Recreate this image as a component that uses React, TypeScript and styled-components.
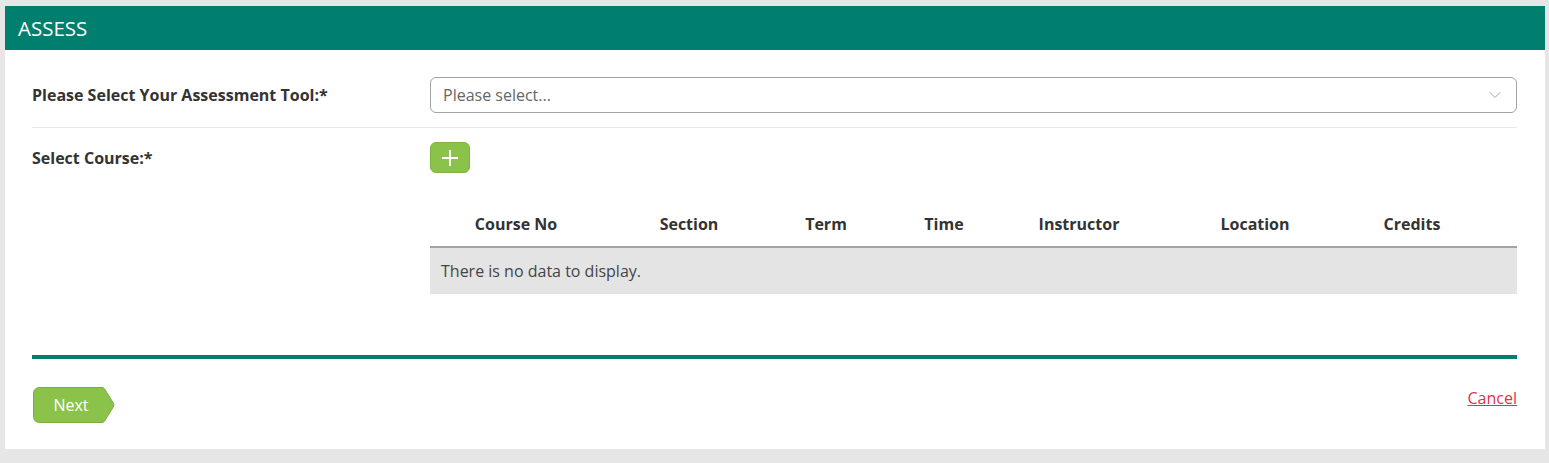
import React from "react";
import styled, { createGlobalStyle } from "styled-components";
import { ChevronDown } from "lucide-react";

const Global = createGlobalStyle`
  html, body { margin: 0; padding: 0; background: #e6e6e6; }
  body { font-family: "Open Sans", "Liberation Sans", sans-serif; color: #333; }
  * { box-sizing: border-box; }
`;

const Page = styled.div`
  padding: 6px 4px 13px 5px;
`;

const Panel = styled.section`
  background: #fff;
`;

const Header = styled.header`
  height: 44px;
  background: #007f6e;
  color: #fff;
  font-size: 20.5px;
  display: flex;
  align-items: center;
  padding-left: 13px;
`;

const Body = styled.div`
  padding: 27px 28px 26px 27px;
`;

const FieldRow = styled.div<{ $divider?: boolean }>`
  display: grid;
  grid-template-columns: 398px 1fr;
  align-items: ${(p) => (p.$divider ? "center" : "start")};
  padding: ${(p) => (p.$divider ? "0 0 14px" : "14px 0 0")};
  border-bottom: ${(p) => (p.$divider ? "1px solid #e8e8e8" : "none")};
`;

const Label = styled.label`
  font-size: 16px;
  font-weight: 700;
  color: #333;
  line-height: 32px;
`;

const Select = styled.div`
  height: 36px;
  border: 1px solid #a3a3a3;
  border-radius: 6px;
  display: flex;
  align-items: center;
  justify-content: space-between;
  padding: 0 11px 0 12px;
  font-size: 16px;
  color: #666;
  svg { color: #9a9a9a; }
`;

const AddButton = styled.button`
  width: 40px;
  height: 31px;
  border: 1px solid #7cb342;
  border-radius: 6px;
  background: #8bc34a;
  display: flex;
  align-items: center;
  justify-content: center;
  padding: 0;
  cursor: pointer;
`;

const Table = styled.div`
  margin-top: 29px;
`;

const HeadRow = styled.div`
  display: grid;
  grid-template-columns: 172px 174px 100px 136px 134px 218px 96px 1fr;
  height: 46px;
  align-items: center;
  border-bottom: 2px solid #a3a3a3;
`;

const HeadCell = styled.div`
  text-align: center;
  font-size: 16px;
  font-weight: 700;
  color: #333;
`;

const EmptyRow = styled.div`
  height: 46px;
  background: #e4e4e4;
  display: flex;
  align-items: center;
  padding-left: 11px;
  font-size: 16px;
  color: #444;
`;

const Rule = styled.hr`
  margin: 61px 0 0;
  border: none;
  height: 4px;
  background: #007f6e;
`;

const Footer = styled.div`
  margin-top: 28px;
  display: flex;
  justify-content: space-between;
  align-items: flex-start;
  padding-left: 1px;
`;

const NextButton = styled.button`
  position: relative;
  width: 82px;
  height: 36px;
  border: none;
  background: transparent;
  padding: 0 6px 0 0;
  color: #fff;
  font-family: inherit;
  font-size: 16px;
  cursor: pointer;
  svg { position: absolute; left: 0; top: 0; }
  span { position: relative; }
`;

const CancelLink = styled.a`
  color: #d9334d;
  font-size: 16px;
  line-height: 22px;
  text-decoration: underline;
  cursor: pointer;
`;

const columns = ["Course No", "Section", "Term", "Time", "Instructor", "Location", "Credits", ""];

export default function App() {
  return (
    <>
      <Global />
      <Page>
        <Panel>
          <Header>ASSESS</Header>
          <Body>
            <FieldRow $divider>
              <Label>Please Select Your Assessment Tool:*</Label>
              <Select>
                <span>Please select...</span>
                <ChevronDown size={20} strokeWidth={1.1} />
              </Select>
            </FieldRow>
            <FieldRow>
              <Label>Select Course:*</Label>
              <div>
                <AddButton aria-label="Add course">
                  <svg width="18" height="18" viewBox="0 0 18 18">
                    <path d="M9 1v16M1 9h16" stroke="#fff" strokeWidth="2" />
                  </svg>
                </AddButton>
                <Table>
                  <HeadRow>
                    {columns.map((c, i) => (
                      <HeadCell key={i}>{c}</HeadCell>
                    ))}
                  </HeadRow>
                  <EmptyRow>There is no data to display.</EmptyRow>
                </Table>
              </div>
            </FieldRow>
            <Rule />
            <Footer>
              <NextButton>
                <svg width="82" height="36" viewBox="0 0 82 36">
                  <path
                    d="M7 0.5 H69 Q70.5 0.5 71.5 1.8 L80.5 16.3 Q81.3 18 80.5 19.7 L71.5 34.2 Q70.5 35.5 69 35.5 H7 Q0.5 35.5 0.5 29 V7 Q0.5 0.5 7 0.5 Z"
                    fill="#8bc34a"
                    stroke="#78ad3f"
                    strokeWidth="1"
                  />
                </svg>
                <span>Next</span>
              </NextButton>
              <CancelLink>Cancel</CancelLink>
            </Footer>
          </Body>
        </Panel>
      </Page>
    </>
  );
}
